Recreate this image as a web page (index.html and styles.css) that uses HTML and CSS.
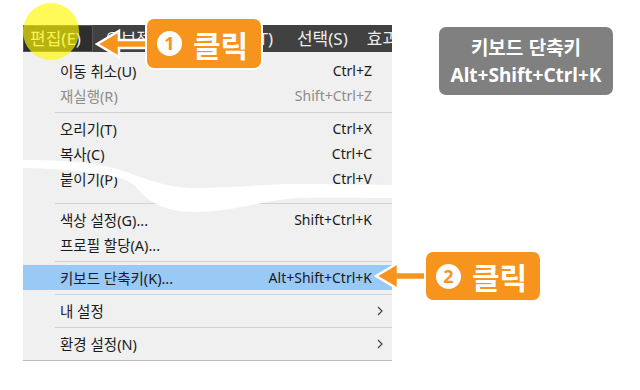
FILE: index.html
```html
<!DOCTYPE html>
<html lang="ko">
<head>
<meta charset="utf-8">
<title>키보드 단축키</title>
<link rel="stylesheet" href="styles.css">
</head>
<body>
<div class="stage">
  <div class="menu">
    <div class="menubar">
      <span class="mb-item active">편집(E)</span>
      <span class="mb-item wide">오브젝트(O)</span>
      <span class="mb-item">문자(T)</span>
      <span class="mb-item tight">선택(S)</span>
      <span class="mb-item">효과(C)</span>
    </div>
    <div class="dropdown">
      <div class="row"><span class="label">이동 취소(U)</span><span class="key">Ctrl+Z</span><span class="sub"></span></div>
      <div class="row disabled"><span class="label">재실행(R)</span><span class="key">Shift+Ctrl+Z</span><span class="sub"></span></div>
      <div class="sep"></div>
      <div class="row"><span class="label">오리기(T)</span><span class="key">Ctrl+X</span><span class="sub"></span></div>
      <div class="row"><span class="label">복사(C)</span><span class="key">Ctrl+C</span><span class="sub"></span></div>
      <div class="row"><span class="label">붙이기(P)</span><span class="key">Ctrl+V</span><span class="sub"></span></div>
      <div class="gap"></div>
      <div class="sep"></div>
      <div class="row"><span class="label">색상 설정(G)...</span><span class="key">Shift+Ctrl+K</span><span class="sub"></span></div>
      <div class="row"><span class="label">프로필 할당(A)...</span><span class="key"></span><span class="sub"></span></div>
      <div class="sep"></div>
      <div class="row hl"><span class="label">키보드 단축키(K)...</span><span class="key">Alt+Shift+Ctrl+K</span><span class="sub"></span></div>
      <div class="sep"></div>
      <div class="row"><span class="label">내 설정</span><span class="key"></span><span class="sub"><svg width="6" height="10" viewBox="0 0 6 10"><polyline points="1,1 5,5 1,9" fill="none" stroke="#444" stroke-width="1.2"/></svg></span></div>
      <div class="sep"></div>
      <div class="row"><span class="label">환경 설정(N)</span><span class="key"></span><span class="sub"><svg width="6" height="10" viewBox="0 0 6 10"><polyline points="1,1 5,5 1,9" fill="none" stroke="#444" stroke-width="1.2"/></svg></span></div>
      <svg class="tear" width="369" height="70" viewBox="23 152 369 70">
        <path fill="#fff" d="M23,160 C60,160 95,162 120,170 C145,178 165,188 195,188 C230,188 260,184 300,184 C340,184 370,185 392,185 L392,198 C360,198 330,197 300,198 C260,200 235,212 195,212 C160,212 145,198 135,186 C125,174 70,169 23,168 Z"/>
      </svg>
    </div>
  </div>

  <div class="spot"></div>

  <div class="callout c1">
    <svg class="arrow" width="54" height="32" viewBox="0 0 54 32"><polygon points="2,16 24,3 24,12 54,12 54,20 24,20 24,29" fill="#f7941d" stroke="#fff" stroke-width="2.5"/></svg>
    <div class="bubble"><span class="num">1</span><span class="word">클릭</span></div>
  </div>

  <div class="callout c2">
    <svg class="arrow" width="54" height="32" viewBox="0 0 54 32"><polygon points="2,16 24,3 24,12 54,12 54,20 24,20 24,29" fill="#f7941d" stroke="#fff" stroke-width="2.5"/></svg>
    <div class="bubble"><span class="num">2</span><span class="word">클릭</span></div>
  </div>

  <div class="badge">
    <div class="badge-title">키보드 단축키</div>
    <div class="badge-keys">Alt+Shift+Ctrl+K</div>
  </div>
</div>
</body>
</html>
```

FILE: styles.css
```css
* { box-sizing: border-box; }

body {
  margin: 0;
  background: #fff;
  font-family: "Noto Sans", "Noto Sans CJK KR", sans-serif;
}

.stage {
  position: relative;
  width: 640px;
  height: 390px;
  overflow: hidden;
}

.menu {
  position: relative;
  margin: 25px 0 0 23px;
  width: 369px;
  overflow: hidden;
}

.menubar {
  display: flex;
  height: 27px;
  background: #414141;
  color: #ececec;
  font-size: 17px;
  white-space: nowrap;
}

.mb-item {
  flex: none;
  height: 27px;
  line-height: 28px;
  padding: 0 12px;
}

.mb-item.wide { padding-right: 19px; }
.mb-item.tight { padding-right: 7px; }

.mb-item.active {
  width: 70px;
  padding: 0 7px;
  background: #2e2e2e;
  box-shadow: inset 0 0 0 1px #575757;
}

.dropdown {
  position: relative;
  background: #f0f0f0;
  padding: 6px 0 4px;
  border-bottom: 1px solid #bcbcbc;
  font-size: 14px;
  color: #1a1a1a;
}

.row {
  display: flex;
  align-items: center;
  height: 25px;
  padding-left: 37px;
  white-space: nowrap;
}

.row .label {
  flex: 1;
  font-size: 14.5px;
}

.row .sub {
  flex: none;
  width: 20px;
  display: flex;
  align-items: center;
  padding-left: 5px;
}

.row.disabled { color: #8c8c8c; }

.row.hl { background: #99c9f5; }

.sep {
  height: 8px;
  display: flex;
  align-items: center;
  padding-left: 32px;
}

.sep::before {
  content: "";
  flex: 1;
  height: 1px;
  background: #d2d2d2;
}

.gap { height: 8px; }

.tear {
  position: absolute;
  left: 0;
  top: 100px;
}

.spot {
  position: absolute;
  left: 23px;
  top: 3px;
  width: 56px;
  height: 57px;
  border-radius: 50%;
  background: rgba(255, 248, 0, 0.66);
}

.callout {
  position: absolute;
  display: flex;
  align-items: center;
}

.c1 { left: 95px; top: 17px; }
.c2 { left: 374px; top: 250px; }

.arrow {
  flex: none;
  display: block;
}

.bubble {
  margin-left: -4px;
  width: 118px;
  display: flex;
  align-items: center;
  height: 53px;
  padding: 0 0 0 10px;
  background: #f7941d;
  border: 2px solid #fff;
  border-radius: 9px;
  color: #fff;
}

.c2 .bubble { height: 52px; }

.num {
  flex: none;
  width: 25px;
  height: 25px;
  margin-right: 11px;
  border-radius: 50%;
  background: #fff;
  color: #f7941d;
  font: 700 18px/25px "Noto Sans", sans-serif;
  text-align: center;
}

.word {
  font: 700 30px/1 "Noto Sans CJK KR", sans-serif;
  letter-spacing: 0;
}

.badge {
  position: absolute;
  left: 439px;
  top: 27px;
  width: 174px;
  height: 68px;
  display: flex;
  flex-direction: column;
  align-items: center;
  justify-content: center;
  background: #808080;
  border-radius: 7px;
  color: #fff;
}

.badge-title {
  font: 700 19px/28px "Noto Sans CJK KR", sans-serif;
}

.badge-keys {
  font: 700 19px/28px "Noto Sans", "Noto Sans CJK KR", sans-serif;
}
```
